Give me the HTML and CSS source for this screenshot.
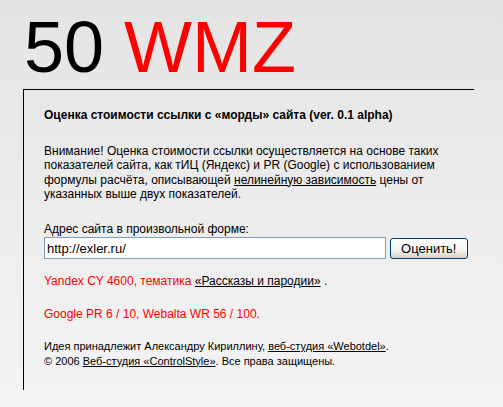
FILE: index.html
```html
<!DOCTYPE html>
<html lang="ru">
<head>
<meta charset="utf-8">
<title>50 WMZ — оценка стоимости ссылки</title>
<link rel="stylesheet" href="styles.css">
</head>
<body>
<div class="page">
  <h1 class="title">50 <span class="title-accent">WMZ</span></h1>
  <div class="panel">
    <h2 class="panel-heading">Оценка стоимости ссылки с «морды» сайта (ver. 0.1 alpha)</h2>
    <p class="note">Внимание! Оценка стоимости ссылки осуществляется на основе таких<br>показателей сайта, как тИЦ (Яндекс) и PR (Google) с использованием<br>формулы расчёта, описывающей <a href="#" class="link">нелинейную зависимость</a> цены от<br>указанных выше двух показателей.</p>
    <form class="check-form" onsubmit="return false">
      <label class="check-label" for="site">Адрес сайта в произвольной форме:</label>
      <div class="check-row">
        <input class="check-input" id="site" type="text" value="http://exler.ru/">
        <button class="check-button" type="submit">Оценить!</button>
      </div>
    </form>
    <p class="result">Yandex CY 4600, тематика <a href="#" class="link">«Рассказы и пародии»</a> <span class="plain">.</span></p>
    <p class="result result-second">Google PR 6 / 10, Webalta WR 56 / 100.</p>
    <p class="credits">Идея принадлежит Александру Кириллину, <a href="#" class="link">веб-студия «Webotdel»</a>.<br>© 2006 <a href="#" class="link">Веб-студия «ControlStyle»</a>. Все права защищены.</p>
  </div>
</div>
</body>
</html>
```
FILE: styles.css
```css
html, body {
  margin: 0;
  padding: 0;
}

body {
  min-height: 100vh;
  background: linear-gradient(#e4e4e4, #f4f4f4);
  color: #000;
  font-family: "Liberation Sans", Arial, sans-serif;
  font-size: 12px;
  line-height: 14.5px;
}

.page {
  padding: 11px 0 0 23px;
}

.title {
  margin: 0 0 6px 1px;
  font-size: 72px;
  line-height: 72px;
  font-weight: normal;
  color: #000;
}

.title-accent {
  color: #ff0000;
}

.panel {
  box-sizing: border-box;
  width: 451px;
  border-top: 1px solid #000;
  border-left: 1px solid #000;
  padding: 18px 6px 22px 20px;
}

.panel-heading {
  margin: 0;
  font-size: 12px;
  line-height: 14.5px;
  font-weight: bold;
}

.note {
  margin: 21px 0 0;
}

.link {
  color: #000;
  text-decoration: underline;
}

.check-form {
  margin: 20px 0 0;
}

.check-label {
  display: block;
}

.check-row {
  display: flex;
  align-items: center;
  gap: 4px;
  margin-top: 1px;
}

.check-input {
  box-sizing: border-box;
  width: 344px;
  height: 22px;
  margin: 0;
  padding: 0 2px;
  border: 1px solid #7f9db9;
  background: #fff;
  font-family: "Liberation Sans", Arial, sans-serif;
  font-size: 13px;
  color: #000;
}

.check-button {
  box-sizing: border-box;
  width: 79px;
  height: 21px;
  margin: 0;
  padding: 0;
  border: 1px solid #003c74;
  border-radius: 3px;
  background: linear-gradient(#ffffff, #f3f3ee 60%, #d6d0c5);
  font-family: "Liberation Sans", Arial, sans-serif;
  font-size: 13px;
  color: #000;
}

.result {
  margin: 15px 0 0;
  color: #ff0000;
}

.result-second {
  margin-top: 18px;
}

.plain {
  color: #000;
}

.credits {
  margin: 18px 0 0;
  font-size: 11px;
}
```
